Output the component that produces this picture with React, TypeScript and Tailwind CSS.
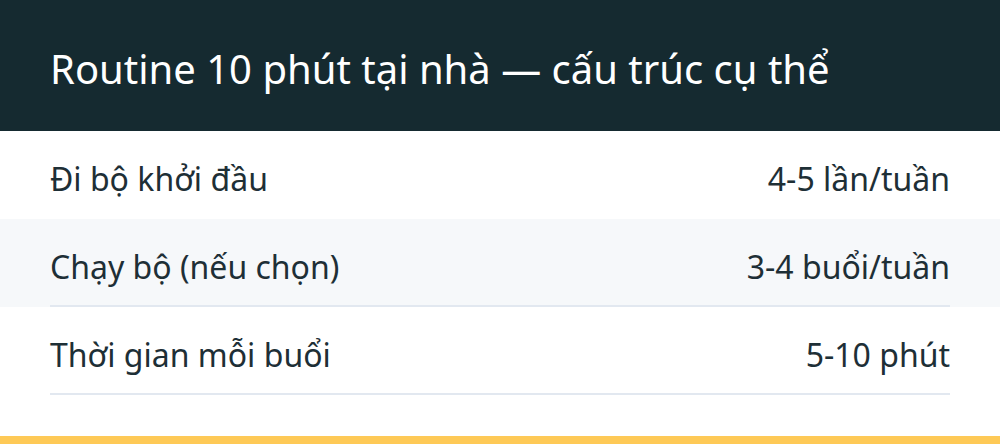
const ROWS = [
  { label: 'Đi bộ khởi đầu', value: '4-5 lần/tuần', border: false },
  { label: 'Chạy bộ (nếu chọn)', value: '3-4 buổi/tuần', border: true },
  { label: 'Thời gian mỗi buổi', value: '5-10 phút', border: true },
]

export default function App() {
  return (
    <div className="w-[1000px] h-[444px] overflow-hidden bg-white flex flex-col" style={{ fontFamily: '"Noto Sans", "Open Sans", sans-serif' }}>
      <div className="h-[131px] bg-[#152a30] flex items-center px-[50px] pt-[7px] shrink-0">
        <h1 className="text-[40px] text-white font-normal leading-none">Routine 10 phút tại nhà — cấu trúc cụ thể</h1>
      </div>
      {ROWS.map((row, i) => (
        <div key={i} className={`shrink-0 px-[50px] ${i === 1 ? 'bg-[#f6f8fa]' : 'bg-white'}`}>
          <div
            className={`h-[88px] pt-[9px] flex items-center justify-between text-[32px] text-[#1e2f36] border-b-2 ${
              row.border ? 'border-[#e2e8f0]' : 'border-transparent'
            }`}
          >
            <span>{row.label}</span>
            <span>{row.value}</span>
          </div>
        </div>
      ))}
      <div className="flex-1" />
      <div className="h-[8px] bg-[#fec956] shrink-0" />
    </div>
  )
}
